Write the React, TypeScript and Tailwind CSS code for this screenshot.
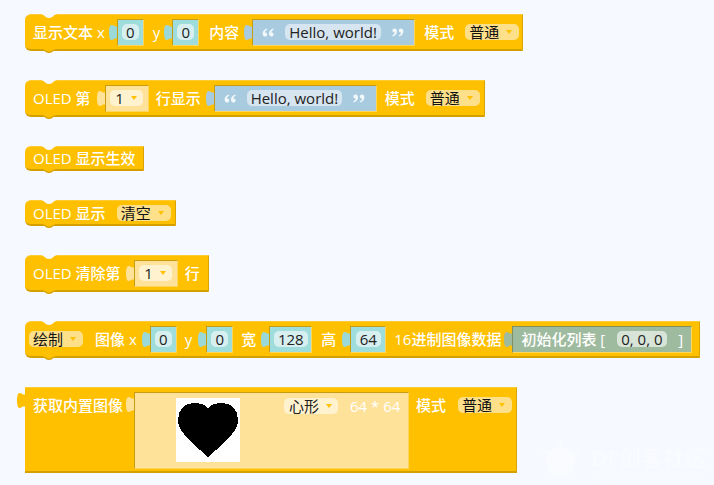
import type { ReactNode } from "react";

function Tab({ color }: { color: string }) {
    return (
        <svg width="8" height="15" viewBox="0 0 8 15" className="shrink-0">
            <path d="M8 1C7 3 5 0 2.5 0C0.8 0 0 3.5 0 7.5C0 11.5 0.8 15 2.5 15C5 15 7 12 8 14Z" fill={color} />
        </svg>
    );
}

function Block({ height, width, notch = true, children }: { height: string; width: string; notch?: boolean; children: ReactNode }) {
    return (
        <div className={`relative flex items-center shrink-0 bg-[#ffc000] border-t border-t-[#ffcb33] border-r border-r-[#d9a400] border-b-2 border-b-[#d3a000] pl-2 ${height} ${width} ${notch ? "rounded-l-md" : ""}`}>
            {notch && (
                <>
                    <svg width="16" height="5" viewBox="0 0 16 5" className="absolute left-[16px] -top-px">
                        <path d="M0 0C3 0 4 4 8 4C12 4 13 0 16 0Z" fill="#f6f9ff" />
                    </svg>
                    <svg width="16" height="5" viewBox="0 0 16 5" className="absolute left-[16px] -bottom-[5px]">
                        <path d="M0 0C3 0 4 4 8 4C12 4 13 0 16 0Z" fill="#d3a000" />
                        <path d="M1 0C4 0 5 2.6 8 2.6C11 2.6 12 0 15 0Z" fill="#ffc000" />
                    </svg>
                </>
            )}
            {children}
        </div>
    );
}

function Label({ children, className = "" }: { children: ReactNode; className?: string }) {
    return <span className={`shrink-0 whitespace-pre text-white font-medium text-[15px] leading-5 ${className}`}>{children}</span>;
}

function NumberField({ value, width, className = "" }: { value: string; width: string; className?: string }) {
    return (
        <div className={`flex items-center shrink-0 ${className}`}>
            <Tab color="#9bd9d9" />
            <div className={`flex items-center justify-center h-[27px] bg-[#9fdcdc] border-t border-l border-t-[#c79c10] border-l-[#c79c10] border-r border-b border-r-[#ffd65c] border-b-[#ffd65c] ${width}`}>
                <span className="px-[4px] h-[16px] rounded-[5px] bg-[#d7efef] text-[#222] text-[15px] leading-[16px]">{value}</span>
            </div>
        </div>
    );
}

function Quote({ flip = false }: { flip?: boolean }) {
    return (
        <svg width="12" height="9" viewBox="0 0 12 9" className={`shrink-0 ${flip ? "rotate-180" : ""}`}>
            <path d="M5 0.5C2.2 1.5 0.6 3 0.6 5.5C0.6 7.4 1.6 8.5 3 8.5C4.3 8.5 5.2 7.6 5.2 6.4C5.2 5.2 4.3 4.4 3 4.5C3.1 3.2 4 2.2 5.4 1.5Z" fill="#f2f7fa" />
            <path d="M11.4 0.5C8.6 1.5 7 3 7 5.5C7 7.4 8 8.5 9.4 8.5C10.7 8.5 11.6 7.6 11.6 6.4C11.6 5.2 10.7 4.4 9.4 4.5C9.5 3.2 10.4 2.2 11.8 1.5Z" fill="#f2f7fa" />
        </svg>
    );
}

function TextField({ className = "" }: { className?: string }) {
    return (
        <div className={`flex items-center shrink-0 ${className}`}>
            <Tab color="#a8cbe0" />
            <div className="flex items-center w-[163px] h-[27px] pl-[9px] bg-[#a8cbe0] border-t border-l border-t-[#c79c10] border-l-[#c79c10] border-r border-b border-r-[#ffd65c] border-b-[#ffd65c]">
                <Quote />
                <span className="ml-[11px] px-[4px] h-[16px] rounded-[5px] bg-[#d6e5ef] text-[#222] text-[15px] leading-[16px] whitespace-pre">Hello, world!</span>
                <span className="ml-[11px]"><Quote flip /></span>
            </div>
        </div>
    );
}

function Dropdown({ value, className = "" }: { value: string; className?: string }) {
    return (
        <div className={`flex items-center shrink-0 w-[54px] h-[16px] pl-[4px] rounded-[5px] bg-[#ffe08a] ${className}`}>
            <span className="text-[#111] text-[15px] leading-[16px]">{value}</span>
            <svg width="6" height="4" viewBox="0 0 6 4" className="ml-[7px]"><path d="M0 0H6L3 4Z" fill="#ffc000" /></svg>
        </div>
    );
}

function LineField({ className = "" }: { className?: string }) {
    return (
        <div className={`flex items-center shrink-0 ${className}`}>
            <Tab color="#ffe299" />
            <div className="flex items-center justify-center w-[44px] h-[27px] bg-[#ffe299] border-t border-l border-t-[#c79c10] border-l-[#c79c10] border-r border-b border-r-[#ffd65c] border-b-[#ffd65c]">
                <div className="flex items-center w-[33px] h-[16px] pl-[5px] rounded-[5px] bg-[#fff3cf]">
                    <span className="text-[#222] text-[15px] leading-4">1</span>
                    <svg width="6" height="4" viewBox="0 0 6 4" className="ml-[7px]"><path d="M0 0H6L3 4Z" fill="#ffc000" /></svg>
                </div>
            </div>
        </div>
    );
}

function Watermark() {
    return (
        <div className="absolute left-[541px] top-[440px] flex items-start gap-[11px] opacity-40 text-white pointer-events-none">
            <svg width="39" height="38" viewBox="0 0 39 38">
                <path d="M19.5 0V7M7 13L1 10M32 13L38 10" stroke="#fff" strokeWidth="2" />
                <path d="M19.5 7C10 7 5 13 5 21C5 31 12 38 19.5 38C27 38 34 31 34 21C34 13 29 7 19.5 7Z" fill="#fff" />
            </svg>
            <div className="flex flex-col gap-[2px] mt-[4px]">
                <span className="text-[22px] leading-[26px] font-bold whitespace-pre">DF创客社区</span>
                <span className="text-[11px] leading-[12px] whitespace-pre">www.DFRobot.com.cn</span>
            </div>
        </div>
    );
}

export default function App() {
    return (
        <div className="relative flex flex-col items-start gap-[29px] w-[714px] h-[485px] overflow-hidden bg-[#f6f9ff] pl-[25px] pt-[14px] font-['Open_Sans','Noto_Sans_CJK_SC',sans-serif]">
            <Block height="h-[37px]" width="w-[498px]">
                <Label>显示文本 x</Label>
                <NumberField value="0" width="w-[27px]" className="ml-[4px]" />
                <Label className="ml-[9px]">y</Label>
                <NumberField value="0" width="w-[27px]" className="ml-[4px]" />
                <Label className="ml-[10px]">内容</Label>
                <TextField className="ml-[5px]" />
                <Label className="ml-[9px]">模式</Label>
                <Dropdown value="普通" className="ml-[11px]" />
            </Block>

            <Block height="h-[37px]" width="w-[460px]">
                <Label>OLED 第</Label>
                <LineField className="ml-[6px]" />
                <Label className="ml-[7px]">行显示</Label>
                <TextField className="ml-[5px]" />
                <Label className="ml-[8px]">模式</Label>
                <Dropdown value="普通" className="ml-[11px]" />
            </Block>

            <Block height="h-[25px]" width="w-[119px]">
                <Label>OLED 显示生效</Label>
            </Block>

            <Block height="h-[26px]" width="w-[151px]">
                <Label>OLED 显示</Label>
                <Dropdown value="清空" className="ml-[11px]" />
            </Block>

            <Block height="h-[37px]" width="w-[184px]">
                <Label>OLED 清除第</Label>
                <LineField className="ml-[5px]" />
                <Label className="ml-[7px]">行</Label>
            </Block>

            <Block height="h-[37px]" width="w-[675px]">
                <Dropdown value="绘制" className="-ml-[4px]" />
                <Label className="ml-[12px]">图像 x</Label>
                <NumberField value="0" width="w-[27px]" className="ml-[5px]" />
                <Label className="ml-[8px]">y</Label>
                <NumberField value="0" width="w-[27px]" className="ml-[6px]" />
                <Label className="ml-[8px]">宽</Label>
                <NumberField value="128" width="w-[43px]" className="ml-[5px]" />
                <Label className="ml-[9px]">高</Label>
                <NumberField value="64" width="w-[36px]" className="ml-[6px]" />
                <Label className="ml-[8px]">16进制图像数据</Label>
                <div className="flex items-center shrink-0 ml-[3px]">
                    <Tab color="#9fbb9f" />
                    <div className="flex items-center w-[180px] h-[27px] pl-[8px] bg-[#9fbb9f] border-t border-l border-t-[#7f8f5f] border-l-[#7f8f5f] border-r border-b border-r-[#ffd65c] border-b-[#ffd65c]">
                        <Label>初始化列表 [</Label>
                        <span className="ml-[12px] px-[4px] w-[50px] h-[16px] rounded-[5px] bg-[#d8e4d8] text-[#222] text-[15px] leading-[16px] whitespace-pre">0, 0, 0</span>
                        <Label className="ml-[11px]">]</Label>
                    </div>
                </div>
            </Block>

            <div className="relative flex items-start shrink-0 w-[492px] h-[86px] bg-[#ffc000] border-t border-t-[#ffcb33] border-r border-r-[#d9a400] border-b-2 border-b-[#d3a000] pl-2">
                <svg width="8" height="15" viewBox="0 0 8 15" className="absolute -left-[8px] top-[5px]">
                    <path d="M8 1C7 3 5 0 2.5 0C0.8 0 0 3.5 0 7.5C0 11.5 0.8 15 2.5 15C5 15 7 12 8 14Z" fill="#ffc000" />
                </svg>
                <Label className="mt-[7px]">获取内置图像</Label>
                <div className="flex items-start shrink-0 ml-[3px] mt-[4px]">
                    <div className="mt-[5px]"><Tab color="#ffe299" /></div>
                    <div className="flex items-start w-[275px] h-[77px] pl-[41px] pt-[5px] bg-[#ffe299] border-t border-l border-t-[#c79c10] border-l-[#c79c10] border-r border-b border-r-[#ffd65c] border-b-[#ffd65c]">
                        <svg width="64" height="64" viewBox="0 0 64 64" shapeRendering="crispEdges" className="shrink-0 bg-white">
                            <path d="M32 10C28 6 23 5 18 5C8 5 2 12 2 22C2 32 10 40 32 59C54 40 62 32 62 22C62 12 56 5 46 5C41 5 36 6 32 10Z" fill="#000" />
                        </svg>
                        <div className="flex items-center shrink-0 w-[54px] h-[16px] ml-[44px] pl-[5px] rounded-[5px] bg-[#fff3cf]">
                            <span className="text-[#222] text-[15px] leading-4">心形</span>
                            <svg width="6" height="4" viewBox="0 0 6 4" className="ml-[7px]"><path d="M0 0H6L3 4Z" fill="#ffc000" /></svg>
                        </div>
                        <Label className="ml-[12px] -mt-[2px]">64 * 64</Label>
                    </div>
                </div>
                <Label className="ml-[7px] mt-[7px]">模式</Label>
                <Dropdown value="普通" className="ml-[12px] mt-[9px]" />
            </div>

            <Watermark />
        </div>
    );
}
